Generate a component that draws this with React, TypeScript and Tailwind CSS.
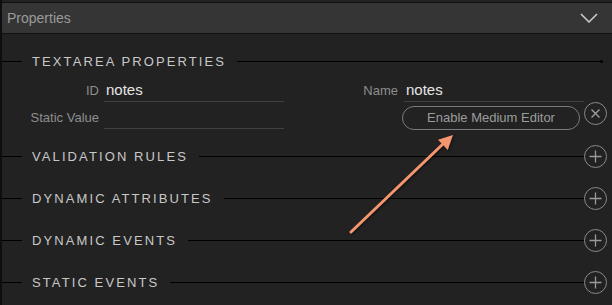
import React from "react";

const Plus = () => (
  <svg width="23" height="23" viewBox="0 0 23 23" className="shrink-0">
    <circle cx="11.5" cy="11.5" r="11" fill="none" stroke="#8a8a8a" strokeWidth="1" />
    <path d="M11.5 5.5v12M5.5 11.5h12" stroke="#9a9a9a" strokeWidth="1.3" />
  </svg>
);

const Close = () => (
  <svg width="23" height="23" viewBox="0 0 23 23" className="shrink-0">
    <circle cx="11.5" cy="11.5" r="11" fill="none" stroke="#8a8a8a" strokeWidth="1" />
    <path d="M7.5 7.5l8 8M15.5 7.5l-8 8" stroke="#a0a0a0" strokeWidth="1.3" />
  </svg>
);

function Section({ title, plus = true, className = "" }: { title: string; plus?: boolean; className?: string }) {
  return (
    <div className={"flex items-center h-[24px] " + className}>
      <div className="w-[20px] h-px bg-black" />
      <span className="ml-[10px] text-[13px] tracking-[2.1px] text-[#c8c8c8] leading-none">{title}</span>
      <div className="flex-1 ml-[11px] h-px bg-black" />
      {plus ? (
        <div className="mr-[5px]">
          <Plus />
        </div>
      ) : (
        <div className="mr-[9px] w-[3px] h-[3px] rounded-full bg-black" />
      )}
    </div>
  );
}

function Field({ label, value, labelW, gap }: { label: string; value: string; labelW: string; gap: string }) {
  return (
    <div className="flex items-center h-[22px]">
      <span className={labelW + " text-right text-[13px] text-[#8e8e8e]"}>{label}</span>
      <div className={gap + " w-[180px] h-[22px] flex items-center border-b border-[#404040] text-[15px] text-[#e6e6e6]"}>
        <span className="pl-[2px]">{value}</span>
      </div>
    </div>
  );
}

export default function App() {
  return (
    <div className="relative w-[612px] h-[305px] overflow-hidden bg-[#222222] border-l-2 border-[#0e0e0e] font-['Liberation_Sans',Arial,sans-serif]">
      <div className="mt-[2px] h-[32px] bg-[#353535] border-y border-[#111] flex items-center justify-between pl-[5px] pr-[14px]">
        <span className="text-[14px] text-[#9a9a9a]">Properties</span>
        <svg width="18" height="10" viewBox="0 0 18 10">
          <polyline points="1,1 9,9 17,1" fill="none" stroke="#cfcfcf" strokeWidth="1.5" />
        </svg>
      </div>

      <Section title="TEXTAREA PROPERTIES" plus={false} className="mt-[15px]" />

      <div className="mt-[7px] flex">
        <div className="w-[298px] flex flex-col gap-[5px]">
          <Field label="ID" value="notes" labelW="w-[97px]" gap="ml-[5px]" />
          <Field label="Static Value" value="" labelW="w-[97px]" gap="ml-[5px]" />
        </div>
        <div className="flex flex-col gap-[4px]">
          <Field label="Name" value="notes" labelW="w-[98px]" gap="ml-[6px]" />
          <div className="flex items-start">
            <button className="ml-[102px] w-[178px] h-[24px] rounded-full border border-[#7a7a7a] text-[13px] text-[#9c9c9c]">
              Enable Medium Editor
            </button>
            <div className="ml-[4px] -mt-[4px]">
              <Close />
            </div>
          </div>
        </div>
      </div>

      <Section title="VALIDATION RULES" className="mt-[14px]" />
      <Section title="DYNAMIC ATTRIBUTES" className="mt-[18px]" />
      <Section title="DYNAMIC EVENTS" className="mt-[18px]" />
      <Section title="STATIC EVENTS" className="mt-[18px]" />

      <svg className="absolute left-0 top-0 pointer-events-none" width="612" height="305" viewBox="0 0 612 305">
        <g style={{ filter: "drop-shadow(1px 1px 1px rgba(0,0,0,0.5))" }}>
          <line x1="349" y1="232" x2="442" y2="143" stroke="#f6966f" strokeWidth="3" strokeLinecap="round" />
          <polygon points="451,135 445.8,150 436,139.7" fill="#f6966f" />
        </g>
      </svg>
    </div>
  );
}
